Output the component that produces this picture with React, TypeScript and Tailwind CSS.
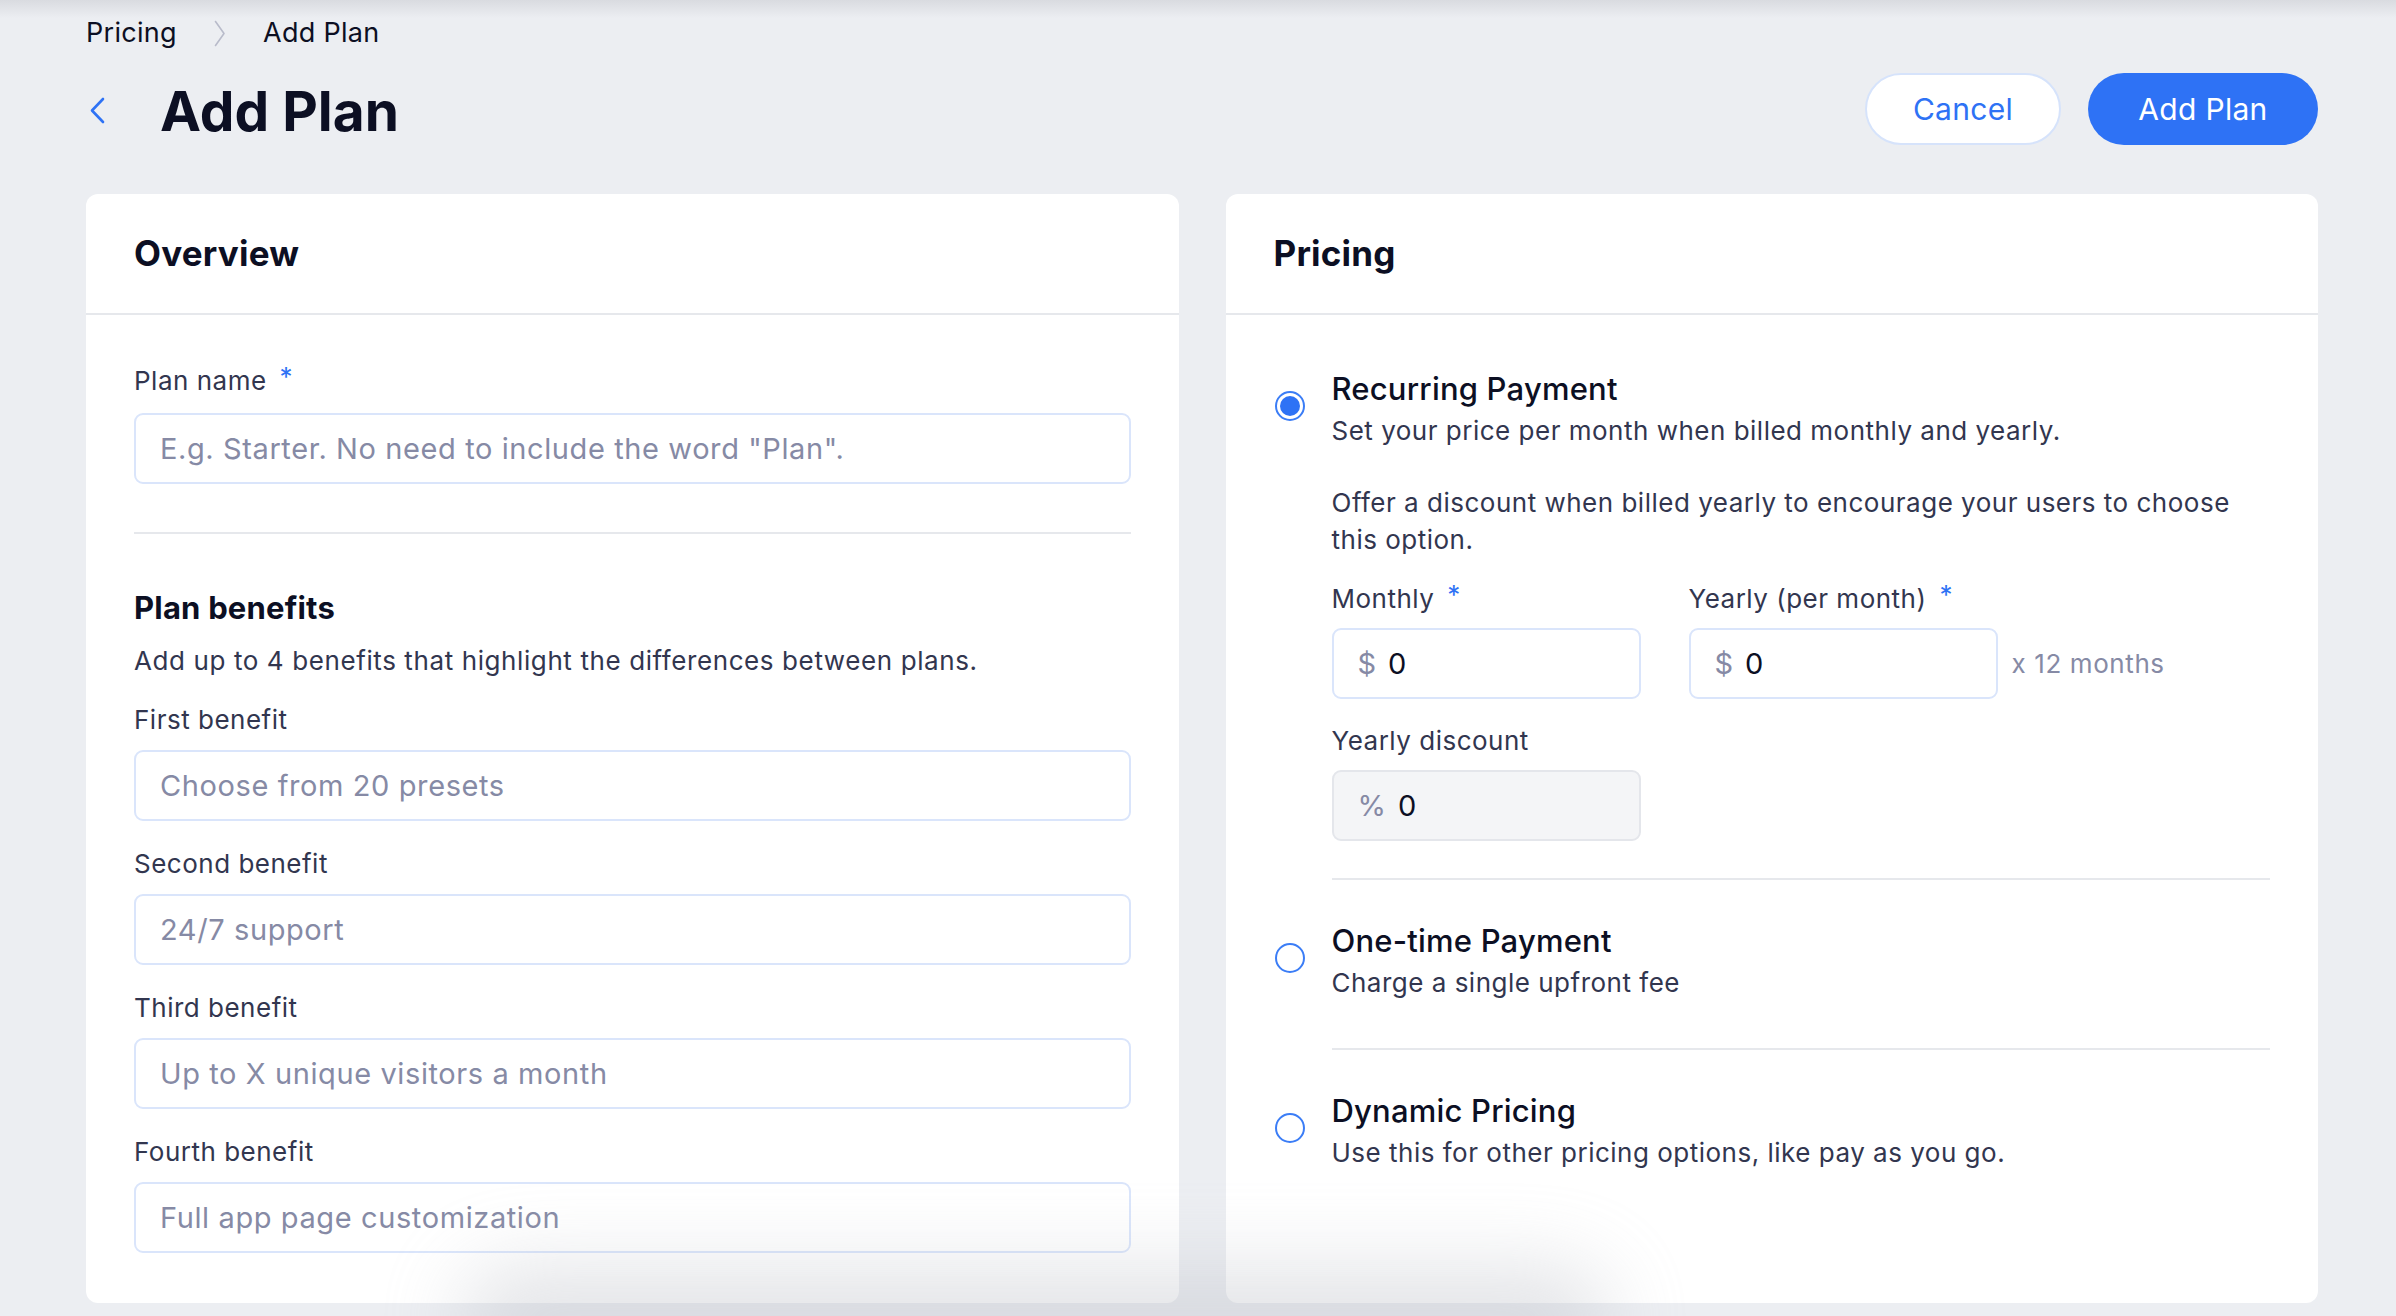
import React from "react";

function Req() {
  return <span className="ml-[13px] relative top-[-4px] text-[#2e72f5]">*</span>;
}

function FieldLabel({ children, required }: { children: React.ReactNode; required?: boolean }) {
  return (
    <div className="h-[36px] leading-[36px] text-[26px] tracking-[0.5px] text-[#32364f]">
      {children}
      {required && <Req />}
    </div>
  );
}

function TextInput({ placeholder, mt = "mt-[12px]" }: { placeholder: string; mt?: string }) {
  return (
    <input
      readOnly
      placeholder={placeholder}
      className={
        mt +
        " w-full h-[71px] rounded-[9px] border-2 border-[#dae5fb] bg-white px-[24px] text-[29px] tracking-[0.6px] text-[#0c0f23] placeholder:text-[#868aa5] outline-none"
      }
    />
  );
}

function MoneyBox({ prefix, gray }: { prefix: string; gray?: boolean }) {
  return (
    <div
      className={
        gray
          ? "mt-[11px] w-[309px] h-[71px] rounded-[9px] border-2 border-[#e4e6eb] bg-[#f4f5f7] flex items-center px-[24px] text-[29px]"
          : "mt-[11px] w-[309px] h-[71px] rounded-[9px] border-2 border-[#dae5fb] bg-white flex items-center px-[24px] text-[29px]"
      }
    >
      <span className="text-[#868aa5]">{prefix}</span>
      <span className="ml-[12px] text-[#0c0f23]">0</span>
    </div>
  );
}

function Radio({ checked }: { checked?: boolean }) {
  return (
    <div className="relative top-[-3px] w-[30px] h-[30px] rounded-full border-2 border-[#3b7df6] flex items-center justify-center shrink-0 bg-white">
      {checked && <div className="w-[20px] h-[20px] rounded-full bg-[#2e72f5]" />}
    </div>
  );
}

function OptionHead({ title, desc, checked }: { title: string; desc: string; checked?: boolean }) {
  return (
    <div className="flex items-center gap-[27px]">
      <Radio checked={checked} />
      <div>
        <div className="h-[40px] leading-[40px] text-[31px] font-medium tracking-[0.2px] text-[#0c0f23]">{title}</div>
        <div className="mt-[4px] h-[36px] leading-[36px] text-[26px] tracking-[0.5px] text-[#32364f]">{desc}</div>
      </div>
    </div>
  );
}

function CardHeader({ title }: { title: string }) {
  return (
    <div className="h-[121px] flex items-center px-[48px] border-b-2 border-[#e6e8ec]">
      <h2 className="text-[35px] font-bold tracking-[0.2px] text-[#0c0f23]">{title}</h2>
    </div>
  );
}

export default function App() {
  return (
    <div className="relative min-h-screen h-[1316px] overflow-hidden bg-[#eceef2] font-['Inter',sans-serif]">
      <div className="absolute inset-x-0 top-0 h-[18px] bg-gradient-to-b from-[#d9dbe0] to-transparent" />

      <div className="relative pl-[86px] pr-[78px] pt-[15px]">
        {/* breadcrumb */}
        <div className="flex items-center h-[36px] text-[27px] tracking-[0.3px] text-[#0c0f23]">
          <span>Pricing</span>
          <svg className="ml-[37px] mr-[37px]" width="12" height="27" viewBox="0 0 12 27" fill="none">
            <path d="M1.5 1.5 L10 13.5 L1.5 25.5" stroke="#b8bbca" strokeWidth="1.6" strokeLinecap="round" strokeLinejoin="round" />
          </svg>
          <span>Add Plan</span>
        </div>

        {/* title row */}
        <div className="mt-[22px] flex items-center justify-between h-[72px]">
          <div className="flex items-center">
            <svg className="ml-[3px] mt-[2px]" width="17" height="27" viewBox="0 0 17 27" fill="none">
              <path d="M14 2 L3 13.5 L14 25" stroke="#2e72f5" strokeWidth="2.6" strokeLinecap="round" strokeLinejoin="round" />
            </svg>
            <h1 className="ml-[54px] mt-[4px] text-[55px] leading-[64px] font-bold text-[#0c0f23]">Add Plan</h1>
          </div>
          <div className="flex items-center gap-[27px]">
            <button className="w-[196px] h-[72px] rounded-full border-2 border-[#d6e3fb] bg-white text-[30px] tracking-[0.3px] text-[#2e72f5]">
              Cancel
            </button>
            <button className="w-[230px] h-[72px] rounded-full bg-[#2e72f5] text-[30px] tracking-[0.3px] text-white">Add Plan</button>
          </div>
        </div>

        {/* cards */}
        <div className="mt-[49px] grid grid-cols-2 gap-[47px]">
          {/* Overview */}
          <div className="bg-white rounded-[12px]">
            <CardHeader title="Overview" />
            <div className="px-[48px] pt-[48px] pb-[50px]">
              <FieldLabel required>Plan name</FieldLabel>
              <TextInput mt="mt-[14px]" placeholder={'E.g. Starter. No need to include the word "Plan".'} />
              <div className="mt-[48px] h-[2px] bg-[#e6e8ec]" />
              <div className="mt-[54px] h-[40px] leading-[40px] text-[31px] font-bold tracking-[0.2px] text-[#0c0f23]">
                Plan benefits
              </div>
              <div className="mt-[15px] h-[36px] leading-[36px] text-[26px] tracking-[0.6px] text-[#32364f]">
                Add up to 4 benefits that highlight the differences between plans.
              </div>
              <div className="mt-[23px] flex flex-col gap-[25px]">
                <div>
                  <FieldLabel>First benefit</FieldLabel>
                  <TextInput placeholder="Choose from 20 presets" />
                </div>
                <div>
                  <FieldLabel>Second benefit</FieldLabel>
                  <TextInput placeholder="24/7 support" />
                </div>
                <div>
                  <FieldLabel>Third benefit</FieldLabel>
                  <TextInput placeholder="Up to X unique visitors a month" />
                </div>
                <div>
                  <FieldLabel>Fourth benefit</FieldLabel>
                  <TextInput placeholder="Full app page customization" />
                </div>
              </div>
            </div>
          </div>

          {/* Pricing */}
          <div className="bg-white rounded-[12px]">
            <CardHeader title="Pricing" />
            <div className="pl-[49px] pr-[48px] pt-[54px] pb-[49px]">
              <OptionHead
                checked
                title="Recurring Payment"
                desc="Set your price per month when billed monthly and yearly."
              />
              <div className="pl-[57px]">
                <div className="mt-[35px] leading-[37px] text-[26px] tracking-[0.5px] text-[#32364f]">
                  Offer a discount when billed yearly to encourage your users to choose
                  <br />
                  this option.
                </div>
                <div className="mt-[23px] flex items-start gap-[48px]">
                  <div>
                    <FieldLabel required>Monthly</FieldLabel>
                    <MoneyBox prefix="$" />
                  </div>
                  <div>
                    <FieldLabel required>Yearly (per month)</FieldLabel>
                    <div className="flex items-end">
                      <MoneyBox prefix="$" />
                      <span className="ml-[14px] h-[71px] leading-[71px] text-[26px] tracking-[0.6px] text-[#868aa5]">
                        x 12 months
                      </span>
                    </div>
                  </div>
                </div>
                <div className="mt-[24px]">
                  <FieldLabel>Yearly discount</FieldLabel>
                  <MoneyBox prefix="%" gray />
                </div>
                <div className="mt-[37px] h-[2px] bg-[#e6e8ec]" />
              </div>

              <div className="mt-[41px]">
                <OptionHead title="One-time Payment" desc="Charge a single upfront fee" />
              </div>
              <div className="pl-[57px]">
                <div className="mt-[47px] h-[2px] bg-[#e6e8ec]" />
              </div>
              <div className="mt-[41px]">
                <OptionHead title="Dynamic Pricing" desc="Use this for other pricing options, like pay as you go." />
              </div>
            </div>
          </div>
        </div>
      </div>

      {/* soft shadow of a floating element near the bottom */}
      <div className="pointer-events-none absolute left-[460px] bottom-[-60px] w-[1150px] h-[110px] rounded-full bg-[#b9bcc4] opacity-40 blur-2xl" />
    </div>
  );
}
